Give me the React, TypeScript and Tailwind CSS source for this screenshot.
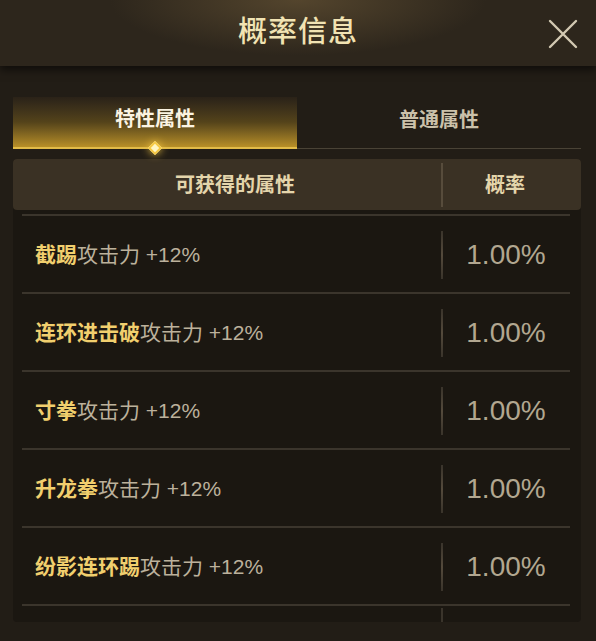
import React from 'react';

const rows = [
  { skill: '截踢', effect: '攻击力 +12%', rate: '1.00%' },
  { skill: '连环进击破', effect: '攻击力 +12%', rate: '1.00%' },
  { skill: '寸拳', effect: '攻击力 +12%', rate: '1.00%' },
  { skill: '升龙拳', effect: '攻击力 +12%', rate: '1.00%' },
  { skill: '纷影连环踢', effect: '攻击力 +12%', rate: '1.00%' },
];

function Separator() {
  return <div className="ml-[9px] mr-[11px] h-[2px] bg-[#3b352c]" />;
}

export default function App() {
  return (
    <div className="h-[641px] w-full overflow-hidden bg-[#221d16] font-['Liberation_Sans','Noto_Sans_CJK_SC',sans-serif]">
      {/* Header */}
      <header className="relative z-10 flex h-[66px] items-center justify-center bg-[radial-gradient(ellipse_45%_120%_at_50%_0%,#54452d_0%,#2d261c_70%)] shadow-[0_4px_8px_rgba(0,0,0,0.55)]">
        <h1 className="text-[29px] font-medium tracking-[1px] text-[#f1e3b3]">概率信息</h1>
        <button className="absolute right-[18px] top-[19px] h-[30px] w-[30px]">
          <svg viewBox="0 0 30 30" className="h-full w-full">
            <path d="M2 2 L28 28 M28 2 L2 28" stroke="#d2c9b2" strokeWidth="2.4" strokeLinecap="round" />
          </svg>
        </button>
      </header>

      <div className="pl-[13px] pr-[15px] pt-[31px]">
        {/* Tabs */}
        <div className="flex border-b border-[#4a4336]">
          <div className="relative -mb-px flex h-[52px] flex-1 items-center justify-center border-b-2 border-[#e2bb48] bg-gradient-to-b from-[#2a2218] via-[#54431a] to-[#b88f27] pb-[6px]">
            <span className="text-[20px] font-bold text-[#fbf4e2]">特性属性</span>
            <div className="absolute -bottom-[6px] left-1/2 h-[10px] w-[10px] -translate-x-1/2 rotate-45 border-2 border-[#f6c944] bg-[#fff6c4] shadow-[0_0_8px_#f6c944]" />
          </div>
          <div className="flex h-[51px] flex-1 items-center justify-center pb-[6px]">
            <span className="text-[20px] font-bold text-[#cbc1aa]">普通属性</span>
          </div>
        </div>

        {/* Table */}
        <div className="mt-[10px] rounded-[4px] bg-[#1b1711]">
          <div className="flex h-[51px] items-center rounded-[4px] bg-[#3a3124]">
            <div className="flex w-[428px] justify-center pl-[16px]">
              <span className="text-[20px] font-bold text-[#e4d5ab]">可获得的属性</span>
            </div>
            <div className="h-[44px] w-[2px] bg-[#574c3c]" />
            <div className="flex flex-1 justify-center pr-[14px]">
              <span className="text-[20px] font-bold text-[#e4d5ab]">概率</span>
            </div>
          </div>

          <div className="pt-[4px]">
            {rows.map((row) => (
              <div key={row.skill}>
                <Separator />
                <div className="flex h-[76px] items-center pt-[2px]">
                  <div className="w-[428px] pl-[22px] text-[21px]">
                    <span className="font-bold text-[#f1cf6e]">{row.skill}</span>
                    <span className="text-[#bcb19c]">{row.effect}</span>
                  </div>
                  <div className="h-[48px] w-[2px] bg-gradient-to-b from-[#3a342b] via-[#544a3c] to-[#3a342b]" />
                  <div className="flex flex-1 justify-center pr-[12px] text-[28px] text-[#b2a790]">{row.rate}</div>
                </div>
              </div>
            ))}
            <Separator />
            <div className="flex h-[16px] items-end">
              <div className="w-[428px]" />
              <div className="h-[14px] w-[2px] bg-[#3a342b]" />
            </div>
          </div>
        </div>
      </div>
    </div>
  );
}
